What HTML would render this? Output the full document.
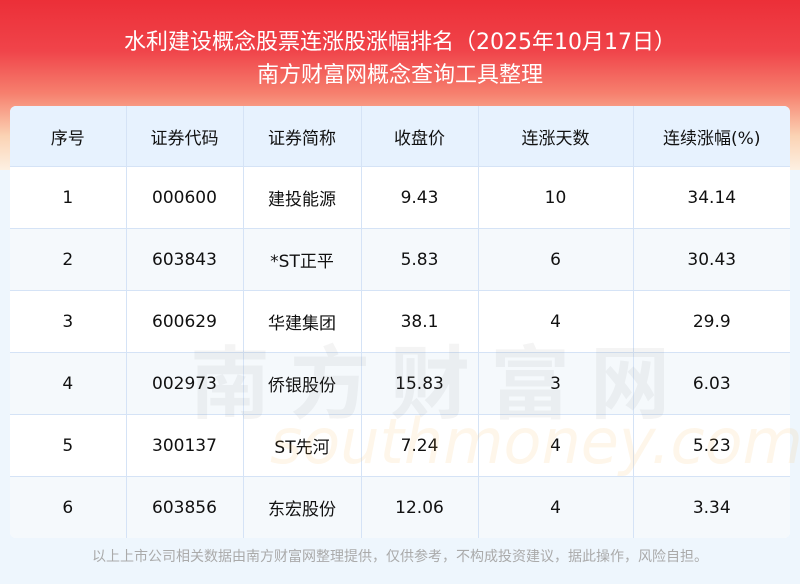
<!DOCTYPE html>
<html><head><meta charset="utf-8"><style>
body{margin:0;width:800px;height:584px;background:#eef6fd;font-family:"DejaVu Sans","Noto Sans CJK SC",sans-serif;position:relative;overflow:hidden}
.bg{position:absolute;left:0;top:0;width:800px;height:170px;background:linear-gradient(180deg,#ec2f38 0%,#f0444a 30%,#f6806e 55%,#fbd3b4 80%,#fdf0e2 100%)}
.t1{position:absolute;top:24px;width:800px;text-align:center;color:#fff;font-size:22px}
.t2{position:absolute;top:57px;width:800px;text-align:center;color:#fff;font-size:22px}
.tbl{position:absolute;left:10px;top:106px;width:780px;border-radius:6px;overflow:hidden;background:#fff}
table{border-collapse:collapse;width:780px;font-size:17px;color:#111}
td{border:1px solid #d5e3f6;text-align:center;height:61px;padding:0}
tr:first-child td{border-top:none;background:#e7f2fe;height:60px}
tr:nth-child(odd):not(:first-child) td{background:#f5f9fc}
td:first-child{border-left:none}td:last-child{border-right:none}
tr:last-child td{border-bottom:none}
.wm{position:absolute;left:190px;top:320px;font-size:80px;color:rgba(120,120,120,.08);letter-spacing:20px;font-weight:bold}
.wm2{position:absolute;left:270px;top:405px;font-size:62px;color:rgba(250,180,80,.12);font-style:italic}
.ft{position:absolute;top:546px;width:800px;text-align:center;font-size:14px;color:#aaa}
</style></head><body>
<div class="bg"></div>
<div class="t1">水利建设概念股票连涨股涨幅排名（2025年10月17日）</div>
<div class="t2">南方财富网概念查询工具整理</div>
<div class="tbl"><table>
<colgroup><col style="width:116px"><col style="width:117px"><col style="width:118px"><col style="width:117px"><col style="width:155px"><col></colgroup>
<tr><td>序号</td><td>证券代码</td><td>证券简称</td><td>收盘价</td><td>连涨天数</td><td>连续涨幅(%)</td></tr>
<tr><td>1</td><td>000600</td><td>建投能源</td><td>9.43</td><td>10</td><td>34.14</td></tr>
<tr><td>2</td><td>603843</td><td>*ST正平</td><td>5.83</td><td>6</td><td>30.43</td></tr>
<tr><td>3</td><td>600629</td><td>华建集团</td><td>38.1</td><td>4</td><td>29.9</td></tr>
<tr><td>4</td><td>002973</td><td>侨银股份</td><td>15.83</td><td>3</td><td>6.03</td></tr>
<tr><td>5</td><td>300137</td><td>ST先河</td><td>7.24</td><td>4</td><td>5.23</td></tr>
<tr><td>6</td><td>603856</td><td>东宏股份</td><td>12.06</td><td>4</td><td>3.34</td></tr>
</table></div>
<div class="wm">南方财富网</div>
<div class="wm2">southmoney.com</div>
<div class="ft">以上上市公司相关数据由南方财富网整理提供，仅供参考，不构成投资建议，据此操作，风险自担。</div>
</body></html>
